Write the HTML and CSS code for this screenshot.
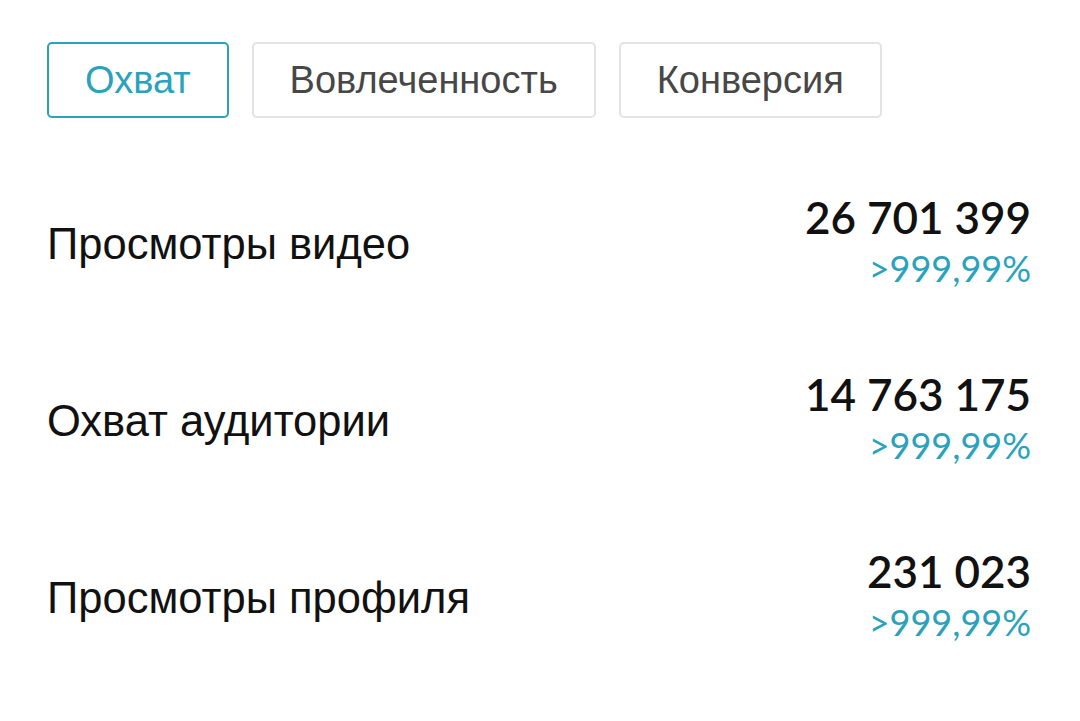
FILE: index.html
```html
<!DOCTYPE html>
<html lang="ru">
<head>
<meta charset="utf-8">
<link rel="stylesheet" href="styles.css">
</head>
<body>
<div class="page">
  <div class="tabs">
    <div class="tab active">Охват</div>
    <div class="tab">Вовлеченность</div>
    <div class="tab">Конверсия</div>
  </div>
  <div class="rows">
    <div class="row">
      <div class="label">Просмотры видео</div>
      <div class="values">
        <div class="num">26 701 399</div>
        <div class="pct">&gt;999,99%</div>
      </div>
    </div>
    <div class="row">
      <div class="label">Охват аудитории</div>
      <div class="values">
        <div class="num">14 763 175</div>
        <div class="pct">&gt;999,99%</div>
      </div>
    </div>
    <div class="row">
      <div class="label">Просмотры профиля</div>
      <div class="values">
        <div class="num">231 023</div>
        <div class="pct">&gt;999,99%</div>
      </div>
    </div>
  </div>
</div>
</body>
</html>
```
FILE: styles.css
```css
html, body {
  margin: 0;
  padding: 0;
  background: #ffffff;
}
.page {
  width: 1080px;
  height: 721px;
  box-sizing: border-box;
  padding: 42px 49px 0 47px;
  font-family: "Liberation Sans", Arial, sans-serif;
}
.tabs {
  display: flex;
  gap: 23px;
}
.tab {
  height: 76px;
  box-sizing: border-box;
  padding: 0 36px;
  display: flex;
  align-items: center;
  border: 2px solid #e3e3e3;
  border-radius: 5px;
  font-size: 38px;
  color: #474747;
}
.tab.active {
  border-color: #2ba2bc;
  color: #2ba2bc;
}
.rows {
  margin-top: 39px;
  display: flex;
  flex-direction: column;
}
.row {
  height: 177px;
  display: flex;
  align-items: center;
  justify-content: space-between;
}
.label {
  font-size: 43.5px;
  color: #111111;
  padding-bottom: 2px;
}
.values {
  display: flex;
  flex-direction: column;
  align-items: flex-end;
  padding-bottom: 11px;
}
.num {
  font-family: Lato, "Liberation Sans", sans-serif;
  font-size: 44px;
  font-weight: 600;
  color: #111111;
  line-height: 54px;
}
.pct {
  font-family: Lato, "Liberation Sans", sans-serif;
  font-size: 36px;
  color: #2ba2bc;
  line-height: 44px;
  margin-top: 2px;
}
```
